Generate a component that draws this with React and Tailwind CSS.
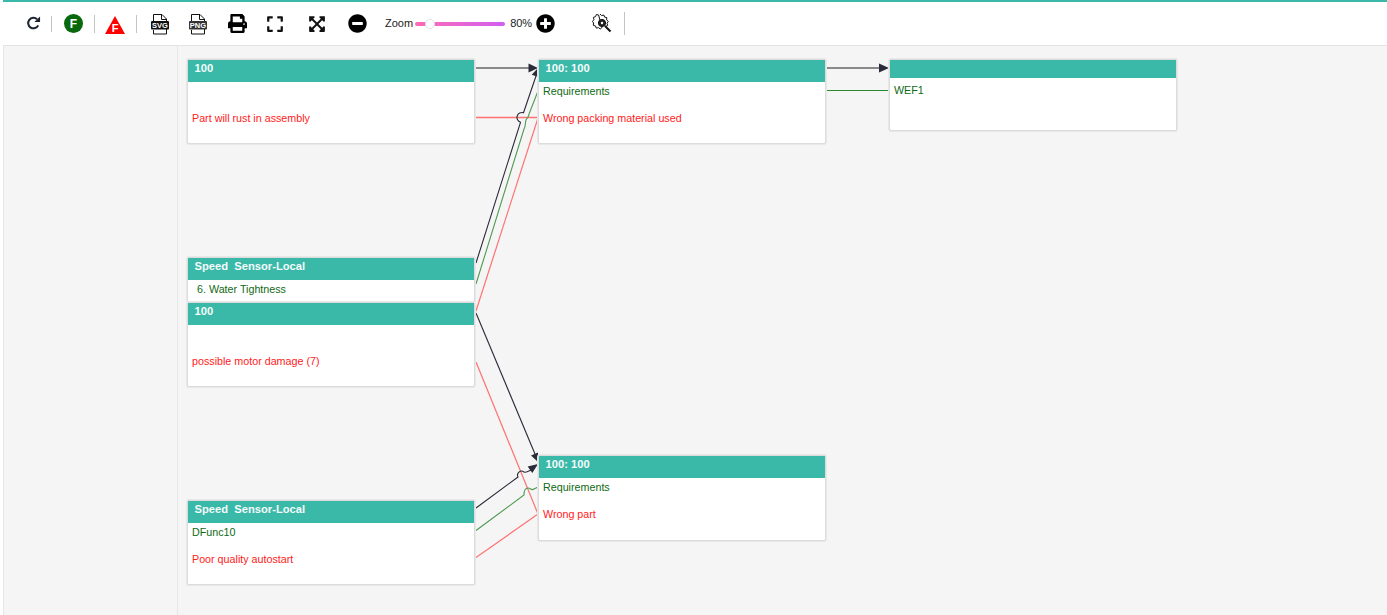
import React from 'react';
import { FaPrint, FaExpand, FaMinusCircle, FaPlusCircle, FaExpandArrowsAlt } from 'react-icons/fa';

const Divider = ({ className }) => <div className={`w-px bg-[#c4c4c4] ${className}`} />;

const FileIcon = ({ label, dark }) => (
  <svg width="18" height="21" viewBox="0 0 18 21">
    <path d="M2.5 7V.5h8.5l4.5 4.5v15h-13V16" fill="#fff" stroke="#111" strokeWidth="1" />
    <path d="M10.5 .5v5h5" fill="none" stroke="#111" strokeWidth="1" />
    <rect x="0" y="7" width="18" height="8.5" rx="1" fill={dark} />
    <text x="9" y="14" textAnchor="middle" fill="#fff" fontFamily="Liberation Sans" fontSize="7.5" fontWeight="700">{label}</text>
  </svg>
);

const Toolbar = () => (
  <div className="flex h-[44px] shrink-0 items-center border-b border-[#e4e4e4] bg-white pl-[23px] font-['Liberation_Sans',sans-serif] text-[11px] text-[#222]">
    <svg width="15" height="16" viewBox="0 0 16 16" className="mb-[1px]">
      <path d="M13 10.5A5.6 5.6 0 1 1 11.8 4" fill="none" stroke="#1c2430" strokeWidth="2.2" />
      <path d="M15 1v6H9z" fill="#1c2430" />
    </svg>
    <Divider className="ml-[10px] h-[16px]" />
    <div className="ml-[12px] flex h-[19px] w-[19px] items-center justify-center rounded-full bg-[#07680d] text-[12px] font-bold text-white">F</div>
    <Divider className="ml-[11px] h-[18px]" />
    <svg width="20" height="18" viewBox="0 0 20 18" className="ml-[10px] mt-[3px]">
      <path d="M10 0l10 18H0z" fill="#f00" />
      <text x="10" y="16" textAnchor="middle" fill="#fff" fontFamily="Liberation Sans" fontSize="11" fontWeight="700">F</text>
    </svg>
    <Divider className="ml-[11px] h-[18px]" />
    <div className="ml-[14px] mt-[1px]"><FileIcon label="SVG" dark="#111" /></div>
    <div className="ml-[20px] mt-[1px]"><FileIcon label="PNG" dark="#333" /></div>
    <FaPrint className="ml-[21px] mb-[1px] text-[19px] text-black" />
    <FaExpand className="ml-[19px] text-[18px] text-[#111]" />
    <FaExpandArrowsAlt className="ml-[24px] text-[18px] text-[#111]" />
    <FaMinusCircle className="ml-[22px] text-[19px] text-black" />
    <span className="ml-[18px]">Zoom</span>
    <div className="relative ml-[2px] h-[4px] w-[90px] rounded-full bg-gradient-to-r from-[#ff69b4] to-[#cf5ff0]">
      <div className="absolute left-[10px] top-[-3px] h-[10px] w-[10px] rounded-full border border-[#e4e4e4] bg-white" />
    </div>
    <span className="ml-[5px]">80%</span>
    <FaPlusCircle className="ml-[4px] text-[19px] text-black" />
    <svg width="20" height="20" viewBox="0 0 20 20" className="ml-[37px] mb-[2px]">
      <path d="M8 1l1.6 1.6 2.2-.6.8 2.1 2.2.5-.2 2.3 1.7 1.5-1.3 1.9.7 2.2-2 .9M10 14.5l-1.8 1.5-1.7-1.4-2.2.5-.8-2.1-2.2-.7.3-2.3L.5 8.5l1.4-1.9-.5-2.2 2.2-.8.8-2.1 2.2.5z" fill="#fff" stroke="#111" strokeWidth="1" />
      <circle cx="10" cy="10" r="3.6" fill="#222" stroke="#111" />
      <circle cx="10" cy="10" r="1.2" fill="#fff" />
      <path d="M13 13l5.5 5.5" stroke="#111" strokeWidth="2" />
    </svg>
    <Divider className="ml-[12px] h-[23px]" />
  </div>
);

const Node = ({ className, title, rows, headerClass = 'h-[22px]', bodyClass = 'pt-[2px]' }) => (
  <div className={`absolute flex w-[288px] flex-col rounded-[2px] border border-[#dcdcdc] bg-white shadow-[0_0_0_1px_#e8e8e8] ${className}`}>
    <div className={`flex shrink-0 items-center whitespace-pre bg-[#3ab9a9] pb-[5px] pl-[6.5px] text-[11.2px] font-bold text-[#f4fbfa] ${headerClass}`}>{title}</div>
    <div className={`flex flex-col gap-[13px] text-[10.72px] leading-[14px] ${bodyClass}`}>
      {rows.map((r, i) => (
        <div key={i} className={`h-[14px] pl-[4px] ${r.red ? 'text-[#ff1a1a]' : 'text-[#0f6a14]'} ${r.indent ? 'ml-[5px]' : ''}`}>{r.text}</div>
      ))}
    </div>
  </div>
);

const BLACK = '#2a2a38';
const GREEN = '#4c9a50';
const RED = '#ff7272';

const Edges = () => (
  <svg className="absolute inset-0" width="1209" height="569" viewBox="178 46 1209 569" fill="none">
    {/* straight top links */}
    <path d="M476 68H530" stroke="#666" strokeWidth="1.6" />
    <path d="M827 68H881" stroke="#666" strokeWidth="1.6" />
    <path d="M827 90.5H889" stroke="#2a8a2e" strokeWidth="1" />
    <path d="M476 117.5H538" stroke={RED} strokeWidth="1.6" />
    {/* into the first middle node */}
    <path d="M476 263L520.5 122.3a5 5 0 0 1 3-9.6L536 76" stroke={BLACK} strokeWidth="1.1" />
    <path d="M476 284L524 129c2-3 1-7 2-9s3-3 3-6L538 91" stroke={GREEN} strokeWidth="1.1" />
    <path d="M476 311L538 118" stroke={RED} strokeWidth="1.2" />
    {/* into the bottom node */}
    <path d="M476 313L535 454" stroke={BLACK} strokeWidth="1.1" />
    <path d="M476 362L538 514" stroke={RED} strokeWidth="1.2" />
    <path d="M476 508L518 477a4 4 0 0 1 6-5c2 1 5-1 7-2" stroke={BLACK} strokeWidth="1.1" />
    <path d="M476 530.5L524 495c0-4 1-7 4-7c3 0 3 3 6 1l4-2" stroke={GREEN} strokeWidth="1.1" />
    <path d="M476 557.5L538 514" stroke={RED} strokeWidth="1.2" />
    {/* arrow heads */}
    <path d="M528.5 63.5L538 68l-9.5 4.5z" fill={BLACK} />
    <path d="M879 63.5L889 68l-10 4.5z" fill={BLACK} />
    <path d="M538 68l1.3 9.2-7.6-2.4z" fill={BLACK} />
    <path d="M538 462l0-9.5-7 3z" fill={BLACK} />
    <path d="M538 464l-5.7 9-4.6-6.4z" fill={BLACK} />
  </svg>
);

export default function App() {
  return (
    <div className="flex h-screen flex-col overflow-hidden border-l-[3px] border-l-white bg-white">
      <div className="-ml-[3px] h-[2px] shrink-0 bg-[#3ab9a9]" />
      <Toolbar />
      <div className="flex min-h-0 flex-1 border-l border-l-[#e6e6e6] bg-[#f5f5f5] font-['Liberation_Sans',sans-serif]">
        <div className="w-[174px] shrink-0 border-r border-r-[#e6e6e6]" />
        <div className="relative flex-1">
          <Edges />
          <Node className="left-[9px] top-[13px] h-[85px]" title="100" rows={[{ text: '' }, { text: 'Part will rust in assembly', red: true }]} />
          <Node className="left-[360px] top-[13px] h-[85px]" title="100: 100" rows={[{ text: 'Requirements' }, { text: 'Wrong packing material used', red: true }]} />
          <Node className="left-[711px] top-[13px] h-[72px]" title="" headerClass="h-[18px]" bodyClass="pt-[5px]" rows={[{ text: 'WEF1' }]} />
          <Node className="left-[9px] top-[211px] h-[45px]" title="Speed  Sensor-Local" rows={[{ text: '6. Water Tightness', indent: true }]} />
          <Node className="left-[9px] top-[256px] h-[85px]" title="100" rows={[{ text: '' }, { text: 'possible motor damage (7)', red: true }]} />
          <Node className="left-[360px] top-[409px] h-[86px]" title="100: 100" rows={[{ text: 'Requirements' }, { text: 'Wrong part', red: true }]} />
          <Node className="left-[9px] top-[454px] h-[85px]" title="Speed  Sensor-Local" rows={[{ text: 'DFunc10' }, { text: 'Poor quality autostart', red: true }]} />
        </div>
      </div>
    </div>
  );
}
